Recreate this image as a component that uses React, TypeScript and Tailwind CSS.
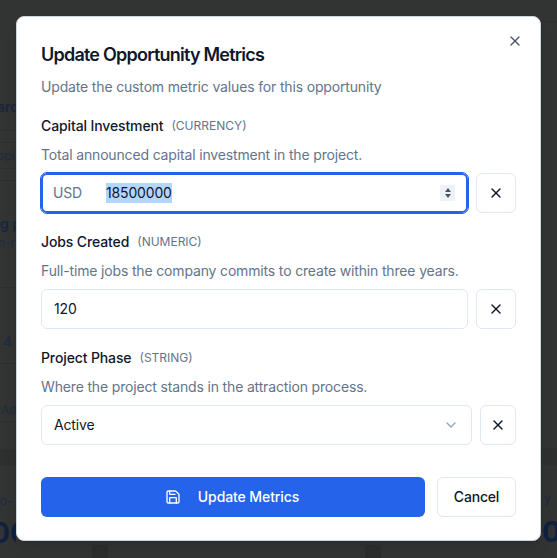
import { ChevronDown, Save, X } from "lucide-react";

const font = { fontFamily: "Inter, sans-serif" };

// strip of the page that shows left of the dialog, top to bottom
const leftRows = [
  { className: "h-[97px]" },
  { className: "h-[34px] border-b border-[#2c2d2d] text-sm font-semibold text-[#18263c] -ml-[3px]", text: "ard" },
  { className: "h-3 border-b border-[#2c2d2d]" },
  { className: "h-[26px] items-center border-b border-[#2c2d2d] text-xs text-[#1e2b40] -ml-[3px]", text: "opi" },
  { className: "h-3 border-b border-[#2c2d2d]" },
  { className: "h-[33px]" },
  { className: "h-5 text-sm font-semibold text-[#18263c]", text: "g p" },
  { className: "h-[18px] items-center text-xs text-[#1e2b40] -ml-[2px]", text: "n-r" },
  { className: "h-9 border-b border-[#2c2d2d]" },
  { className: "h-[76px] border-b border-[#2c2d2d] pt-11 pl-[3px] text-sm text-[#1e2b40]", text: "4" },
  { className: "h-[58px] border-b border-[#2c2d2d] pt-[38px] pl-px text-xs text-[#1e2b40]", text: "Ad" },
  { className: "h-[27px]" },
  { className: "h-[17px] bg-[#2e2f2f]" },
  { className: "h-[27px]" },
  { className: "h-[22px] text-xs text-[#1e2b40] -ml-1", text: "to-" },
  { className: "h-9 text-[28px] leading-9 font-bold text-[#0f2040] -ml-[9px]", text: "00" },
];

const rightRows = [
  { className: "h-[22px] border-b border-[#2c2d2d]" },
  { className: "h-[426px]" },
  { className: "h-[17px] bg-[#2e2f2f]" },
  { className: "h-[26px]" },
  { className: "h-[23px] pl-[3px] text-xs text-[#1e2b40]", text: "y" },
  { className: "h-9 pl-px text-[28px] leading-9 font-bold text-[#0f2040]", text: "00" },
];

function PageStrip({ rows }: { rows: { className: string; text?: string }[] }) {
  return (
    <div className="flex w-4 shrink-0 flex-col overflow-hidden">
      {rows.map((row, index) => (
        <div key={index} className={`flex shrink-0 whitespace-nowrap ${row.className}`}>
          {row.text}
        </div>
      ))}
    </div>
  );
}

function ClearButton({ width = "w-10" }: { width?: string }) {
  return (
    <button
      type="button"
      className={`flex h-10 ${width} shrink-0 items-center justify-center rounded-md border border-[#e2e8f0] bg-white text-[#0f172a]`}
    >
      <X className="size-4" />
    </button>
  );
}

function Field({
  label,
  type,
  hint,
  children,
}: {
  label: string;
  type: string;
  hint: string;
  children: React.ReactNode;
}) {
  return (
    <div className="mt-[19px]">
      <div className="flex h-5 items-center gap-2">
        <span className="text-sm leading-5 font-medium tracking-[-0.12px] text-[#0f172a]">{label}</span>
        <span className="text-xs leading-4 text-[#64748b]">({type})</span>
      </div>
      <p className="mt-[9px] mb-2 text-sm leading-5 tracking-[-0.16px] text-[#64748b]">{hint}</p>
      <div className="flex gap-2">{children}</div>
    </div>
  );
}

export default function App() {
  return (
    <div className="relative flex h-[558px] w-[557px] overflow-hidden bg-[#323333]" style={font}>
      {/* page behind the overlay, only the edges show */}
      <PageStrip rows={leftRows} />
      <div className="flex flex-1 items-end gap-[257px] pl-[76px]">
        <div className="h-[13px] w-4 rounded-t-sm bg-[#2c2d2d]" />
        <div className="h-[13px] w-4 rounded-t-sm bg-[#2c2d2d]" />
      </div>
      <PageStrip rows={rightRows} />

      <div className="absolute inset-0 flex justify-center pt-4">
        <div className="relative flex h-[525px] w-[525px] flex-col rounded-lg border border-[#cbd5e1] bg-white px-6 pt-6 shadow-lg">
          <button type="button" className="absolute top-4 right-[17px] text-[#475569]">
            <X className="size-4" />
          </button>

          <h2 className="text-lg leading-7 font-semibold tracking-[-0.77px] text-[#0f172a]">
            Update Opportunity Metrics
          </h2>
          <p className="mt-2 text-sm leading-5 tracking-[-0.16px] text-[#64748b]">
            Update the custom metric values for this opportunity
          </p>

          <Field label="Capital Investment" type="CURRENCY" hint="Total announced capital investment in the project.">
            <div className="flex h-10 flex-1 items-center rounded-md border-2 border-[#2563eb] pr-[11px] pl-[10px] text-sm tracking-[-0.16px] outline-1 outline-[#2563eb]">
              <span className="w-[53px] text-[#64748b]">USD</span>
              <span className="bg-[#b4d5fe] text-[#0f172a]">18500000</span>
              <span className="ml-auto flex h-4 w-[15px] flex-col items-center justify-center gap-[2px] bg-[#eef1f6]">
                <span className="h-0 w-0 border-x-[3.5px] border-b-[4px] border-x-transparent border-b-[#475569]" />
                <span className="h-0 w-0 border-x-[3.5px] border-t-[4px] border-x-transparent border-t-[#475569]" />
              </span>
            </div>
            <ClearButton />
          </Field>

          <Field
            label="Jobs Created"
            type="NUMERIC"
            hint="Full-time jobs the company commits to create within three years."
          >
            <div className="flex h-10 flex-1 items-center rounded-md border border-[#e2e8f0] px-3 text-sm tracking-[-0.16px] text-[#0f172a]">
              120
            </div>
            <ClearButton />
          </Field>

          <Field label="Project Phase" type="STRING" hint="Where the project stands in the attraction process.">
            <div className="flex h-10 flex-1 items-center justify-between rounded-md border border-[#e2e8f0] px-3 text-sm tracking-[-0.16px] text-[#0f172a]">
              Active
              <ChevronDown className="size-4 text-[#94a3b8]" />
            </div>
            <ClearButton width="w-9" />
          </Field>

          <div className="mt-8 flex gap-3">
            <button
              type="button"
              className="flex h-10 flex-1 items-center justify-center gap-[17px] rounded-md bg-[#2563eb] pr-[2px] text-sm font-medium tracking-[-0.1px] text-white"
            >
              <Save className="size-4" />
              Update Metrics
            </button>
            <button
              type="button"
              className="h-10 w-[79px] rounded-md border border-[#e2e8f0] bg-white text-sm font-medium tracking-[-0.2px] text-[#0f172a]"
            >
              Cancel
            </button>
          </div>
        </div>
      </div>
    </div>
  );
}
